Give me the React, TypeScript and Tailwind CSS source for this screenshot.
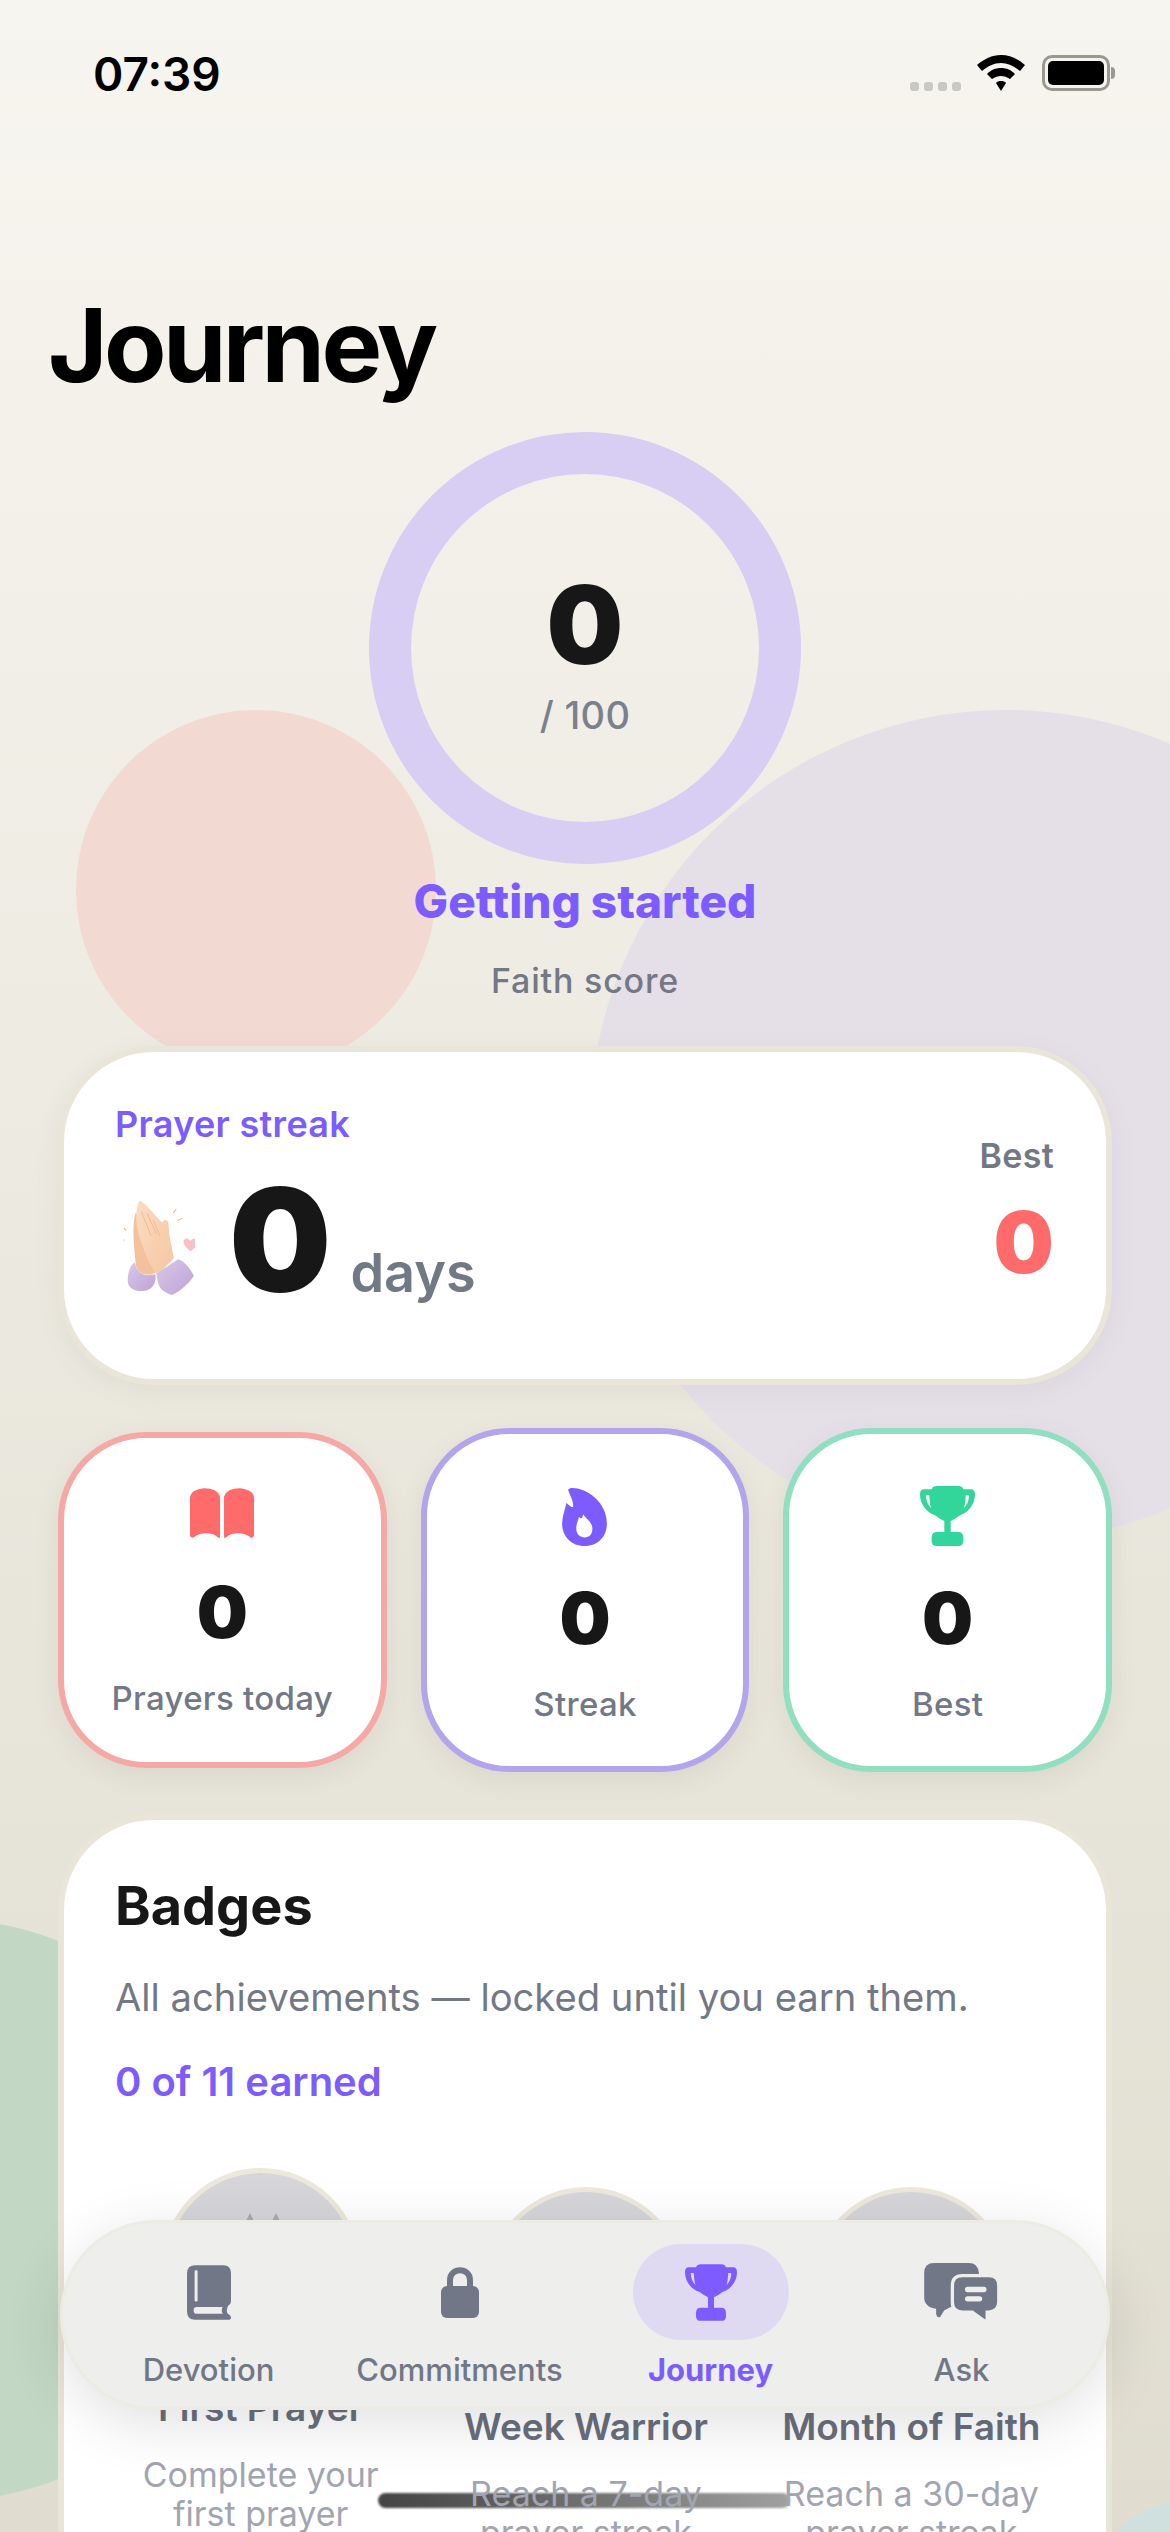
const font = { fontFamily: 'Inter, "Noto Sans", sans-serif' };

function PrayingHands() {
  return (
    <svg viewBox="40 55 215 290" className="w-[72px] h-[97px] shrink-0">
      <defs>
        <linearGradient id="skin" x1="0" y1="0" x2="1" y2="1">
          <stop offset="0" stopColor="#fbdcc2" />
          <stop offset="1" stopColor="#f6c6a0" />
        </linearGradient>
        <linearGradient id="cuff" x1="0" y1="0" x2="1" y2="1">
          <stop offset="0" stopColor="#d9c8e8" />
          <stop offset="1" stopColor="#bda3d8" />
        </linearGradient>
      </defs>
      <path d="M78 95 C66 130 72 190 78 250 C80 285 130 290 140 270 C125 220 105 150 78 95Z" fill="#f3c19c" />
      <path d="M54 300 C54 270 64 250 76 245 C78 275 105 290 136 280 C142 300 130 328 100 330 C75 332 54 320 54 300Z" fill="url(#cuff)" />
      <path d="M88 60 C102 60 140 110 158 125 C162 115 175 115 176 130 C178 170 186 200 192 232 C175 250 160 265 142 282 C125 262 110 230 100 200 C80 150 72 100 88 60Z" fill="url(#skin)" />
      <path d="M95 92 L124 165 M112 98 L140 160 M130 118 L150 165" stroke="#e8ad84" strokeWidth="2" fill="none" />
      <path d="M140 278 L205 235 C225 240 245 270 252 285 C235 310 205 335 185 342 C165 335 150 325 146 310 C144 300 140 290 140 278Z" fill="url(#cuff)" />
      <path d="M242 211 C225 198 218 188 222 178 C226 170 238 172 241 181 C245 173 258 172 264 178 C268 190 255 202 242 211Z" fill="#f7bfc6" />
      <path d="M190 97 L199 85 M202 119 L217 113 M43 143 L49 149 M43 176 L44 179" stroke="#eeb052" strokeWidth="3" fill="none" />
    </svg>
  );
}

function OpenBook({ className }: { className: string }) {
  return (
    <svg viewBox="33 30 192 148" className={className} fill="currentColor">
      <path d="M33 60 Q33 35 75 30 Q115 30 123 55 V178 H118 Q105 165 80 165 Q60 165 42 178 Q33 178 33 170Z" />
      <path d="M135 55 Q143 30 183 30 Q225 35 225 60 V170 Q225 178 216 178 Q198 165 178 165 Q153 165 140 178 H135Z" />
    </svg>
  );
}

function Flame({ className }: { className: string }) {
  return (
    <svg viewBox="37 30 135 178" className={className} fill="currentColor">
      <path
        fillRule="evenodd"
        d="M55 38 C60 30 80 32 100 40 C140 55 172 95 172 140 C172 180 145 208 105 208 C65 208 37 180 37 140 C37 120 45 100 50 78 C58 85 65 92 70 90 C72 70 60 55 55 38Z M100 112 C100 125 92 128 88 120 C84 135 78 145 80 160 C82 175 92 182 105 182 C120 182 130 170 128 152 C126 135 112 128 100 112Z"
      />
    </svg>
  );
}

function Trophy({ className }: { className: string }) {
  return (
    <svg viewBox="30 30 165 180" className={className} fill="currentColor">
      <path
        fillRule="evenodd"
        d="M65 40 Q68 30 80 30 H145 Q157 30 160 40 H185 Q195 42 195 55 C195 85 175 110 150 118 Q135 130 122 135 V168 H145 Q160 168 160 185 V195 Q160 210 145 210 H80 Q65 210 65 195 V185 Q65 168 80 168 H103 V135 Q90 130 75 118 C50 110 30 85 30 55 Q30 42 40 40Z M48 58 C48 75 55 88 63 96 C60 85 58 70 58 58Z M177 58 C177 75 170 88 162 96 C165 85 167 70 167 58Z"
      />
    </svg>
  );
}

function ClosedBook() {
  return (
    <svg viewBox="110 15 133 165" className="w-[44px] h-[55px]">
      <path d="M135 15 H220 Q243 15 243 40 V125 Q243 132 235 137 Q228 148 232 160 Q243 168 243 172 Q243 180 235 180 H135 Q110 180 110 155 V40 Q110 15 135 15Z" fill="#717786" />
      <rect x="133" y="30" width="9" height="95" rx="4" fill="#eeeeec" />
      <path d="M140 141 H218 Q212 150 218 162 H140 Q130 162 130 151 Q130 141 140 141Z" fill="#eeeeec" />
    </svg>
  );
}

function Lock() {
  return (
    <svg viewBox="0 0 38 52" className="w-[38px] h-[52px]">
      <path d="M9 24 V14 C9 1 29 1 29 14 V24" fill="none" stroke="#717786" strokeWidth="6" />
      <rect x="0" y="20" width="38" height="32" rx="6" fill="#717786" />
    </svg>
  );
}

function AskIcon() {
  return (
    <svg viewBox="70 32 225 178" className="w-[75px] h-[59px]">
      <path d="M100 32 H205 Q232 32 235 62 V120 L130 175 L118 195 Q108 198 106 185 V170 Q70 165 70 135 V62 Q70 32 100 32Z" fill="#717786" />
      <path d="M185 70 H265 Q295 70 295 100 V150 Q295 178 265 180 H260 V200 Q258 212 248 204 L215 180 H185 Q155 180 155 150 V100 Q155 70 185 70Z" fill="#717786" stroke="#eeeeec" strokeWidth="10" />
      <rect x="193" y="104" width="65" height="16" rx="8" fill="#eeeeec" />
      <rect x="193" y="132" width="52" height="16" rx="8" fill="#eeeeec" />
    </svg>
  );
}

function StatCard({ icon, label, border, tall }: { icon: React.ReactNode; label: string; border: string; tall: boolean }) {
  return (
    <div className={`rounded-[88px] bg-white border-[6px] shadow-[0_8px_24px_rgba(120,110,90,0.10)] flex flex-col items-center ${border} ${tall ? 'h-[344px] pt-[51px]' : 'h-[336px] pt-[44px]'}`}>
      <div className="h-[62px] flex items-center justify-center">{icon}</div>
      <div className={`text-[72px] leading-[88px] font-black text-[#171717] ${tall ? 'mt-[27px]' : 'mt-[24px]'}`}>0</div>
      <div className="mt-[22px] text-[33px] leading-[40px] font-medium tracking-[0.3px] text-[#737886]">{label}</div>
    </div>
  );
}

function Badge({ title, lines, offset }: { title: string; lines: string[]; offset: boolean }) {
  return (
    <div className={`flex flex-col items-center ${offset ? 'mt-[19px]' : ''}`}>
      <div className="w-[198px] h-[198px] rounded-full bg-[#d6d6da] border-[5px] border-[#ece8dc] flex justify-center">
        {!offset && (
          <svg viewBox="0 0 36 10" className="w-[36px] h-[10px] mt-[40px] ml-[4px]">
            <path d="M5 0 L10 10 H0Z M31 0 L36 10 H26Z" fill="#a9a9b0" />
          </svg>
        )}
      </div>
      <div className="relative z-20 mt-[19px] text-[37px] leading-[46px] font-semibold text-[#6a6f7d] whitespace-nowrap">{title}</div>
      <div className="relative z-20 mt-[24px] text-[34px] leading-[39px] text-[#a1a5b1] text-center whitespace-nowrap">
        {lines.map((l) => (
          <div key={l}>{l}</div>
        ))}
      </div>
    </div>
  );
}

function NavItem({ icon, label, active }: { icon: React.ReactNode; label: string; active?: boolean }) {
  return (
    <div className="flex flex-col items-center">
      <div className={`w-[156px] h-[96px] rounded-[48px] flex items-center justify-center ${active ? 'bg-[#dfdaf1]' : ''}`}>{icon}</div>
      <div className={`mt-[11px] text-[31px] leading-[38px] whitespace-nowrap ${active ? 'font-bold text-[#7c5cff]' : 'font-medium text-[#717786]'}`}>{label}</div>
    </div>
  );
}

export default function App() {
  return (
    <div style={font} className="relative w-[1170px] h-[2532px] overflow-hidden bg-gradient-to-b from-[#f7f5ef] to-[#e0ddd0]">
      {/* background blobs */}
      <div className="absolute left-[76px] top-[710px] w-[360px] h-[360px] rounded-full bg-[#f2d9d2]" />
      <div className="absolute left-[590px] top-[710px] w-[832px] h-[832px] rounded-full bg-[#e5dfe8]" />
      <div className="absolute left-[-340px] top-[1920px] w-[580px] h-[580px] rounded-full bg-[#c2d8c4]" />
      <div className="absolute left-[1090px] top-[2500px] w-[200px] h-[200px] rounded-full bg-[#cfe0df]" />

      <div className="relative flex flex-col">
        {/* status bar */}
        <div className="h-[110px] pl-[93px] pr-[55px] pt-[46px] flex items-start justify-between">
          <span className="text-[46px] leading-[56px] font-semibold text-black">07:39</span>
          <div className="flex items-center mt-[9px]">
            <div className="flex gap-[5px] mt-[26px] mr-[16px]">
              <span className="w-[9px] h-[9px] rounded-[3px] bg-[#c9c8c4]" />
              <span className="w-[9px] h-[9px] rounded-[3px] bg-[#c9c8c4]" />
              <span className="w-[9px] h-[9px] rounded-[3px] bg-[#c9c8c4]" />
              <span className="w-[9px] h-[9px] rounded-[3px] bg-[#c9c8c4]" />
            </div>
            <svg viewBox="0 0 48 36" className="w-[48px] h-[36px] mr-[17px]">
              <path d="M24 0 C33 0 41 4 48 10 L43 16 C37 11 31 8 24 8 C17 8 11 11 5 16 L0 10 C7 4 15 0 24 0Z" fill="#000" />
              <path d="M24 13 C30 13 34 15 38 19 L33 24 C30 22 27 21 24 21 C21 21 18 22 15 24 L10 19 C14 15 18 13 24 13Z" fill="#000" />
              <path d="M24 26 C26 26 28 26.500 29 28 L24 36 L19 28 C20 26.500 22 26 24 26Z" fill="#000" />
            </svg>
            <div className="flex items-center">
              <div className="w-[68px] h-[36px] rounded-[10px] border-[3px] border-[#999891] p-[3px]">
                <div className="w-full h-full rounded-[5px] bg-black" />
              </div>
              <div className="w-[4px] h-[12px] rounded-r-full bg-[#999891] ml-[1px]" />
            </div>
          </div>
        </div>

        <h1 className="mt-[179px] pl-[48px] text-[102px] leading-[112px] font-bold text-black tracking-[-3.6px]">Journey</h1>

        {/* score ring */}
        <div className="mt-[31px] flex flex-col items-center">
          <div className="w-[432px] h-[432px] rounded-full border-[42px] border-[#d8cdf3] flex flex-col items-center justify-center">
            <div className="mt-[6px] text-[108px] leading-[120px] font-black text-[#171717]">0</div>
            <div className="mt-[8px] text-[38px] leading-[44px] font-medium tracking-[0.3px] text-[#7b808d]">/ 100</div>
          </div>
          <div className="mt-[10px] text-[46px] leading-[54px] font-extrabold text-[#7c5cff]">Getting started</div>
          <div className="mt-[32px] text-[34px] leading-[42px] font-medium tracking-[0.8px] text-[#737886]">Faith score</div>
        </div>

        {/* streak card */}
        <div className="mt-[44px] mx-[58px] h-[339px] rounded-[96px] bg-white border-[6px] border-[#e9e5d9] shadow-[0_6px_24px_rgba(120,110,90,0.08)] flex justify-between pl-[51px] pr-[52px]">
          <div className="flex flex-col">
            <div className="mt-[50px] text-[36px] leading-[44px] font-semibold tracking-[0.3px] text-[#7c5cff]">Prayer streak</div>
            <div className="mt-[29px] flex items-end">
              <div className="ml-[8px] mb-[12px]"><PrayingHands /></div>
              <div className="flex items-baseline">
                <div className="ml-[34px] text-[144px] leading-[130px] font-black text-[#171717] tracking-[-2px]">0</div>
                <div className="ml-[21px] text-[54px] leading-[70px] font-semibold text-[#737886]">days</div>
              </div>
            </div>
          </div>
          <div className="flex flex-col items-end">
            <div className="mt-[83px] text-[34px] leading-[42px] font-semibold tracking-[0.3px] text-[#737886]">Best</div>
            <div className="mt-[16px] text-[85px] leading-[100px] font-black text-[#ff6b6b]">0</div>
          </div>
        </div>

        {/* stat cards */}
        <div className="mt-[43px] mx-[58px] grid grid-cols-3 gap-[34px] items-center">
          <StatCard tall={false} border="border-[#f6a8a5]" label="Prayers today" icon={<OpenBook className="w-[64px] h-[50px] text-[#ff6b6b]" />} />
          <StatCard tall border="border-[#b3a5ec]" label="Streak" icon={<Flame className="w-[45px] h-[59px] text-[#7c5cff]" />} />
          <StatCard tall border="border-[#8fdfc0]" label="Best" icon={<Trophy className="w-[55px] h-[60px] text-[#33d69a]" />} />
        </div>

        {/* badges */}
        <div className="mt-[42px] mx-[58px] h-[900px] rounded-[96px] bg-white border-[6px] border-[#e9e5d9] pl-[51px] pr-[52px] pt-[54px]">
          <div className="text-[54px] leading-[64px] font-bold text-[#171717]">Badges</div>
          <div className="mt-[35px] text-[38.2px] leading-[48px] text-[#737886] whitespace-nowrap">All achievements — locked until you earn them.</div>
          <div className="mt-[37px] text-[40px] leading-[48px] font-semibold text-[#7c5cff]">0 of 11 earned</div>
          <div className="mt-[62px] ml-[-17px] mr-[-20px] grid grid-cols-3">
            <Badge title="First Prayer" lines={['Complete your', 'first prayer']} offset={false} />
            <Badge title="Week Warrior" lines={['Reach a 7-day', 'prayer streak']} offset />
            <Badge title="Month of Faith" lines={['Reach a 30-day', 'prayer streak']} offset />
          </div>
        </div>
      </div>

      {/* home indicator */}
      <div className="absolute z-10 left-[378px] top-[2493px] w-[412px] h-[15px] rounded-full bg-gradient-to-r from-[#444444] to-[#a0a0a0] blur-[1px]" />

      {/* tab bar */}
      <div className="absolute z-30 left-[60px] top-[2220px] w-[1050px] h-[190px] rounded-[95px] bg-[#eeeeec] border-[3px] border-[#ecebe4] shadow-[0_14px_60px_rgba(0,0,0,0.12)] grid grid-cols-4 px-[20px] pt-[21px]">
        <NavItem label="Devotion" icon={<ClosedBook />} />
        <NavItem label="Commitments" icon={<Lock />} />
        <NavItem active label="Journey" icon={<Trophy className="w-[52px] h-[57px] text-[#7c5cff]" />} />
        <NavItem label="Ask" icon={<AskIcon />} />
      </div>
    </div>
  );
}
